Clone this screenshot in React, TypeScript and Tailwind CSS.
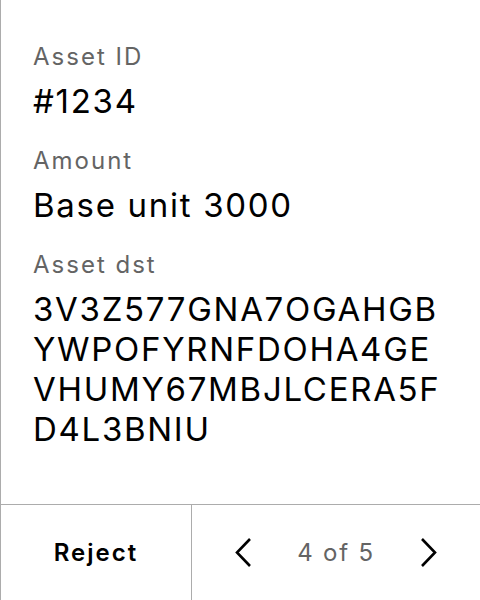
const fields = [
  { label: "Asset ID", lines: ["#1234"] },
  { label: "Amount", lines: ["Base unit 3000"] },
  {
    label: "Asset dst",
    lines: ["3V3Z577GNA7OGAHGB", "YWPOFYRNFDOHA4GE", "VHUMY67MBJLCERA5F", "D4L3BNIU"],
  },
];

function Chevron({ dir }: { dir: "left" | "right" }) {
  return (
    <svg width="18" height="31" viewBox="0 0 18 31" fill="none" aria-hidden>
      <path
        d={dir === "left" ? "M16 2 L3 15.5 L16 29" : "M2 2 L15 15.5 L2 29"}
        stroke="#000"
        strokeWidth="2.6"
      />
    </svg>
  );
}

export default function App() {
  return (
    <div className="flex h-[600px] w-[480px] flex-col border-l border-[#acacac] bg-white font-['Inter',sans-serif] antialiased">
      <div className="flex flex-1 flex-col gap-6 pl-[32px] pr-4 pt-[41px]">
        {fields.map((f) => (
          <div key={f.label} className="flex flex-col gap-2">
            <p className="text-[24px] leading-[32px] tracking-[2px] text-[#646464]">{f.label}</p>
            <p className="text-[33px] leading-[40px] tracking-[1.7px] text-black">
              {f.lines.map((l) => (
                <span key={l} className="block whitespace-nowrap">
                  {l}
                </span>
              ))}
            </p>
          </div>
        ))}
      </div>

      <div className="flex h-[96px] border-t border-[#acacac]">
        <button className="flex w-[191px] items-center justify-center border-r border-[#acacac] text-[24px] font-semibold tracking-[2px] text-black">
          Reject
        </button>
        <div className="flex flex-1 items-center justify-between px-[42px]">
          <button className="flex items-center">
            <Chevron dir="left" />
          </button>
          <span className="text-[24px] tracking-[1.8px] text-[#646464]">4 of 5</span>
          <button className="flex items-center">
            <Chevron dir="right" />
          </button>
        </div>
      </div>
    </div>
  );
}
